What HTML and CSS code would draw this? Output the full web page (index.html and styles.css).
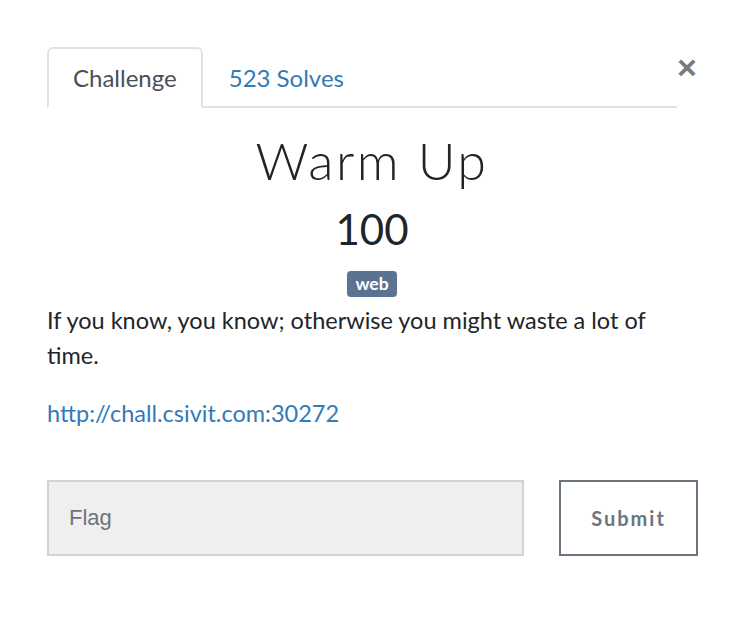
FILE: index.html
```html
<!DOCTYPE html>
<html>
<head>
<meta charset="utf-8">
<link rel="stylesheet" href="styles.css">
</head>
<body>
<div class="modal">
  <div class="header">
    <ul class="tabs">
      <li class="tab active">Challenge</li>
      <li class="tab">523 Solves</li>
    </ul>
    <button class="close" aria-label="Close">&times;</button>
  </div>
  <div class="body">
    <h2 class="name">Warm Up</h2>
    <h3 class="value">100</h3>
    <div class="tags"><span class="badge">web</span></div>
    <p class="desc">If you know, you know; otherwise you might waste a lot of time.</p>
    <p class="desc"><a href="#" class="link">http://chall.csivit.com:30272</a></p>
    <div class="submit-row">
      <input class="flag" type="text" placeholder="Flag">
      <button class="submit">Submit</button>
    </div>
  </div>
</div>
</body>
</html>
```
FILE: styles.css
```css
* { box-sizing: border-box; }
body {
  margin: 0;
  background: #fff;
  font-family: Lato, "Open Sans", sans-serif;
  color: #212529;
}
.modal {
  width: 743px;
  padding: 47px 46px 0 47px;
}
.header {
  display: flex;
  align-items: flex-start;
}
.tabs {
  flex: 1;
  display: flex;
  list-style: none;
  margin: 0;
  padding: 0;
  border-bottom: 2px solid #dee2e6;
}
.tab {
  height: 61px;
  padding: 0 24px;
  font-size: 24px;
  line-height: 58px;
  color: #337ab7;
  border: 2px solid transparent;
  border-radius: 6px 6px 0 0;
  margin-bottom: -2px;
}
.tab.active {
  color: #495057;
  border-color: #dee2e6 #dee2e6 #fff;
  background: #fff;
}
.close {
  background: none;
  border: 0;
  padding: 0;
  margin: 4px 0 0 0;
  width: 20px;
  font-family: "Liberation Sans", Arial, sans-serif;
  font-size: 34px;
  font-weight: bold;
  line-height: 32px;
  color: #7a7a7a;
  cursor: pointer;
}
.body {
  padding-top: 22px;
}
.name {
  margin: 0;
  text-align: center;
  font-family: Lato, sans-serif;
  font-weight: 300;
  font-size: 52px;
  letter-spacing: 2.5px;
  line-height: 60px;
}
.value {
  margin: 12px 0 0;
  text-align: center;
  font-weight: 400;
  font-size: 42px;
  line-height: 54px;
}
.tags {
  text-align: center;
  margin-top: 15px;
  line-height: 26px;
  height: 26px;
}
.badge {
  display: inline-block;
  background: #5b7290;
  color: #fff;
  font-weight: 700;
  font-size: 17.5px;
  line-height: 26px;
  padding: 0 8px;
  border-radius: 4px;
  vertical-align: top;
}
.desc {
  margin: 6px 0 23px;
  font-size: 23.5px;
  line-height: 35px;
}
.desc + .desc { margin-top: 0; }
.link {
  color: #337ab7;
  text-decoration: none;
}
.submit-row {
  display: flex;
  gap: 35px;
  margin-top: 49px;
}
.flag {
  flex: 0 0 477px;
  height: 76px;
  background: #efefef;
  border: 2px solid #cfd4d9;
  padding: 0 20px;
  font-family: "Liberation Sans", Arial, sans-serif;
  font-size: 22px;
  color: #495057;
  outline: none;
}
.flag::placeholder { color: #6c757d; }
.submit {
  flex: 0 0 139px;
  height: 76px;
  background: #fff;
  border: 2px solid #6c757d;
  font-family: Lato, sans-serif;
  font-weight: 700;
  font-size: 20px;
  letter-spacing: 2px;
  color: #6c757d;
}
```
